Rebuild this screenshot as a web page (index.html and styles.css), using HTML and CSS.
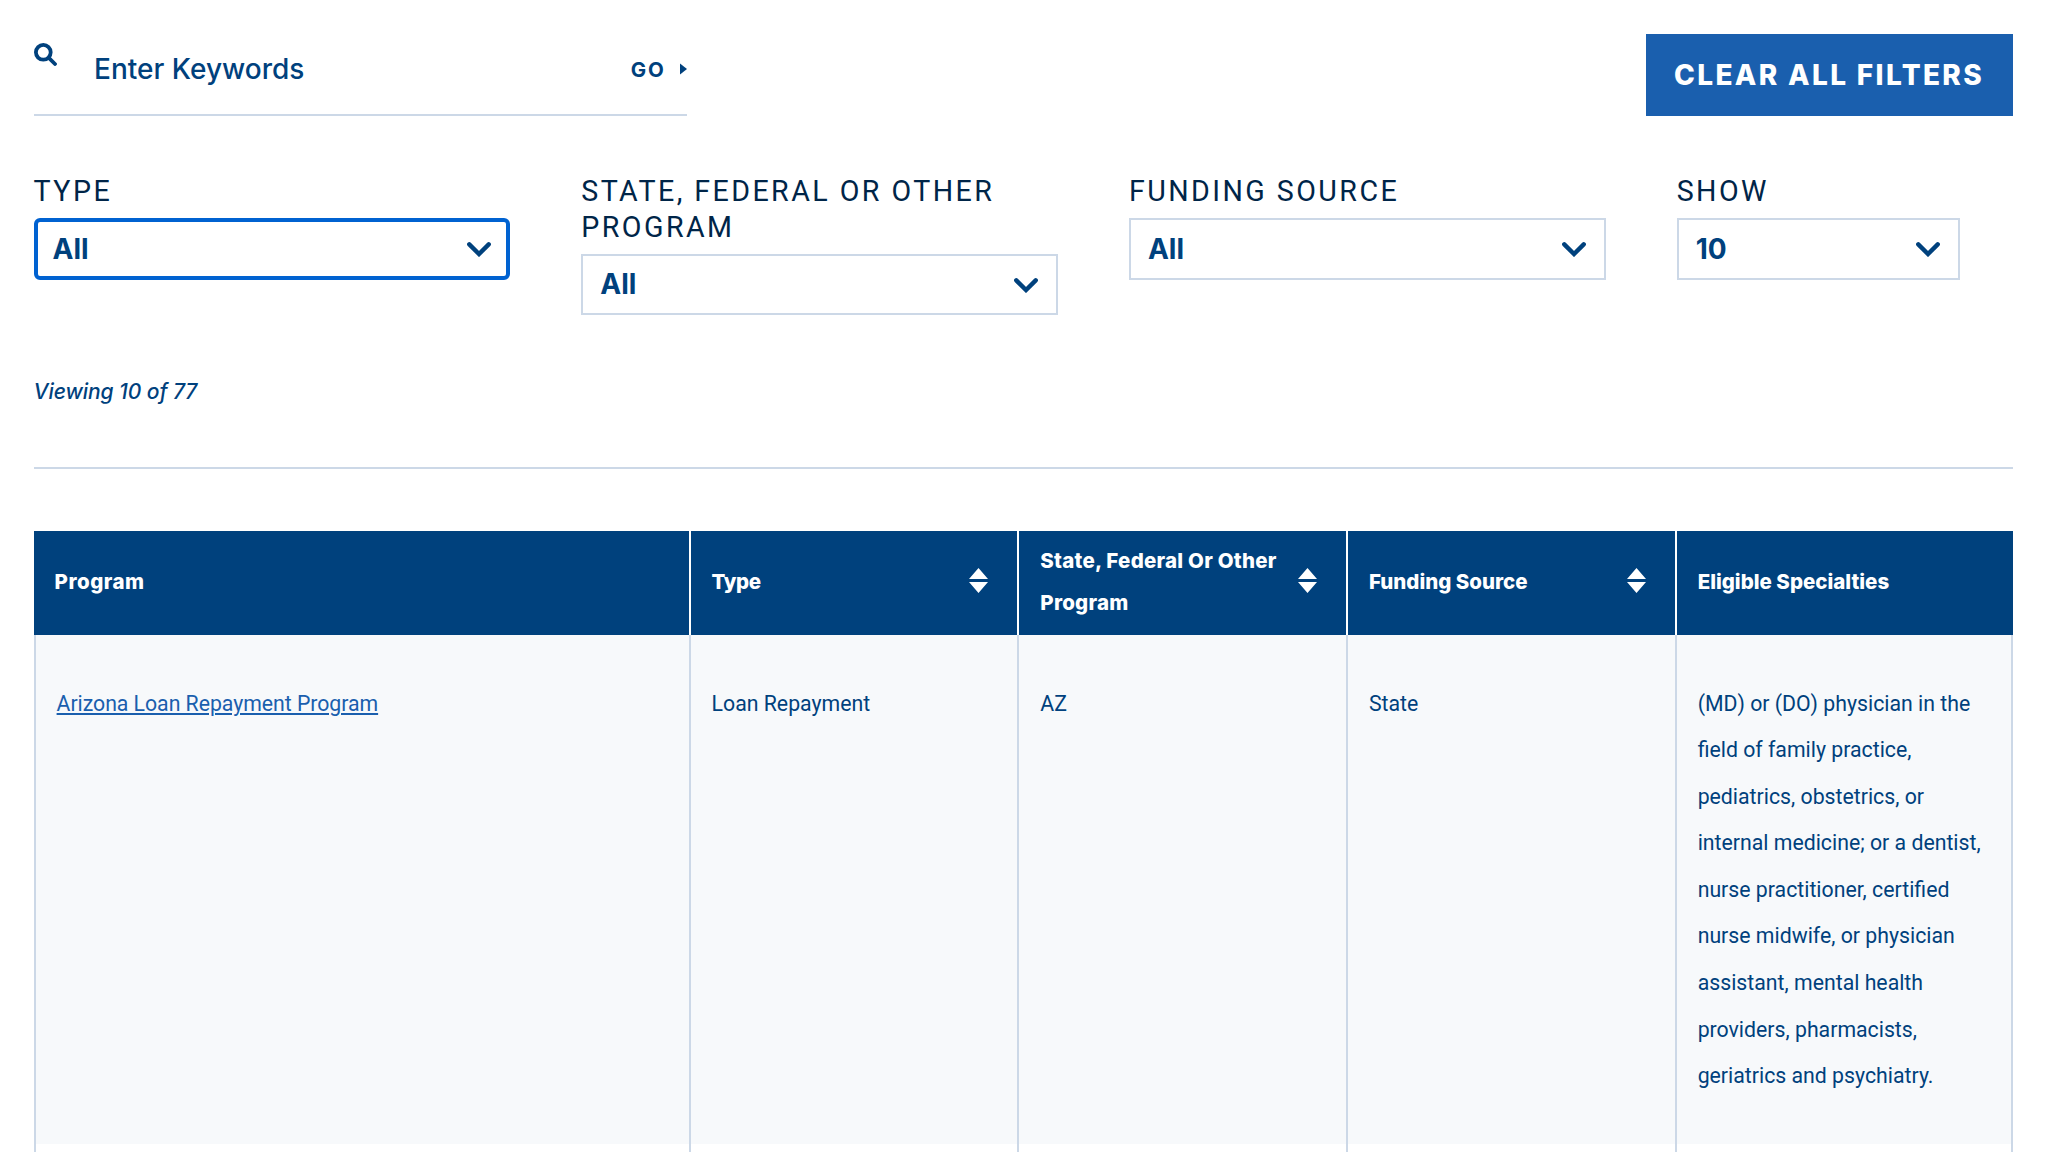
FILE: index.html
```
<!DOCTYPE html>
<html lang="en">
<head>
    <meta charset="UTF-8">
    <meta name="viewport" content="width=device-width, initial-scale=1.0">
    <title>Loan Repayment Programs</title>
    <link rel="stylesheet" href="styles.css">
</head>
<body>
    <div class="container">
        <div class="top-bar">
            <form class="search">
                <svg class="search-icon" viewBox="0 0 23 23"><circle cx="9.3" cy="9.3" r="7.4"/><path d="M14.8 14.8L21 21"/></svg>
                <span class="search-text">Enter Keywords</span>
                <button class="go-button" type="button">Go <svg class="go-arrow" viewBox="0 0 7 12"><path d="M0 0.5L7 6L0 11.5Z"/></svg></button>
            </form>
            <button class="clear-button" type="button">Clear All Filters</button>
        </div>

        <div class="filters">
            <div class="filter">
                <div class="filter-label">Type</div>
                <div class="select focused"><span>All</span><svg class="chevron" viewBox="0 0 24 15"><path d="M2.3 2.4L12 12L21.7 2.4"/></svg></div>
            </div>
            <div class="filter">
                <div class="filter-label">State, Federal or Other Program</div>
                <div class="select"><span>All</span><svg class="chevron" viewBox="0 0 24 15"><path d="M2.3 2.4L12 12L21.7 2.4"/></svg></div>
            </div>
            <div class="filter">
                <div class="filter-label">Funding Source</div>
                <div class="select"><span>All</span><svg class="chevron" viewBox="0 0 24 15"><path d="M2.3 2.4L12 12L21.7 2.4"/></svg></div>
            </div>
            <div class="filter filter-small">
                <div class="filter-label">Show</div>
                <div class="select"><span>10</span><svg class="chevron" viewBox="0 0 24 15"><path d="M2.3 2.4L12 12L21.7 2.4"/></svg></div>
            </div>
        </div>

        <p class="viewing">Viewing 10 of 77</p>

        <table class="programs">
            <thead>
                <tr>
                    <th class="col-program">Program</th>
                    <th class="col"><div class="sortable"><span class="h-type">Type</span><svg class="sort" viewBox="0 0 19 25"><path d="M0 11L9.5 0L19 11ZM0 14H19L9.5 25Z"/></svg></div></th>
                    <th class="col"><div class="sortable"><span class="h-state">State, Federal Or Other Program</span><svg class="sort" viewBox="0 0 19 25"><path d="M0 11L9.5 0L19 11ZM0 14H19L9.5 25Z"/></svg></div></th>
                    <th class="col"><div class="sortable"><span>Funding Source</span><svg class="sort" viewBox="0 0 19 25"><path d="M0 11L9.5 0L19 11ZM0 14H19L9.5 25Z"/></svg></div></th>
                    <th>Eligible Specialties</th>
                </tr>
            </thead>
            <tbody>
                <tr>
                    <td class="program-cell"><a href="#">Arizona Loan Repayment Program</a></td>
                    <td>Loan Repayment</td>
                    <td>AZ</td>
                    <td>State</td>
                    <td>(MD) or (DO) physician in the field of family practice, pediatrics, obstetrics, or internal medicine; or a dentist, nurse practitioner, certified nurse midwife, or physician assistant, mental health providers, pharmacists, geriatrics and psychiatry.</td>
                </tr>
                <tr class="next-row">
                    <td></td>
                    <td></td>
                    <td></td>
                    <td></td>
                    <td></td>
                </tr>
            </tbody>
        </table>
    </div>
</body>
</html>
```
FILE: styles.css
```
* {
    box-sizing: border-box;
}

body {
    margin: 0;
    height: 1152px;
    overflow: hidden;
    background-color: #fff;
    color: #00417d;
    font-family: Roboto, sans-serif;
}

.container {
    width: 1979px;
    margin-left: 33.6px;
    padding-top: 34px;
}

.top-bar {
    display: flex;
    justify-content: space-between;
    height: 82px;
}

.search {
    display: flex;
    width: 653px;
    border-bottom: 2px solid #ccd8e7;
}

.search-icon {
    width: 23px;
    height: 23px;
    margin-top: 9px;
    fill: none;
    stroke: #00417d;
    stroke-width: 3.8;
    stroke-linecap: round;
}

.search-text {
    flex: 1;
    margin-left: 37.5px;
    font: 500 28px/70px Inter, sans-serif;
}

.go-button {
    display: flex;
    align-items: center;
    gap: 14px;
    height: 70px;
    padding: 0;
    border: none;
    background: none;
    color: #00417d;
    font: 700 20.5px Inter, sans-serif;
    letter-spacing: 1.8px;
    text-transform: uppercase;
}

.go-arrow {
    width: 7px;
    height: 12px;
    fill: #00417d;
}

.clear-button {
    width: 367px;
    padding: 0 0 1px;
    border: none;
    background-color: #1a5fae;
    color: #fff;
    font: 800 28px Inter, sans-serif;
    letter-spacing: 2.35px;
    text-transform: uppercase;
    white-space: nowrap;
}

.filters {
    display: flex;
    align-items: flex-start;
    gap: 71px;
    height: 197px;
    margin-top: 58px;
}

.filter {
    width: 476.7px;
}

.filter-small {
    width: 283px;
}

.filter-label {
    margin-bottom: 8.5px;
    color: #002548;
    font-size: 28.6px;
    line-height: 35.5px;
    letter-spacing: 2.45px;
    text-transform: uppercase;
}

.select {
    display: flex;
    justify-content: space-between;
    align-items: center;
    height: 61.5px;
    padding: 0 18px 0 17px;
    border: 2px solid #ccd8e7;
    font: 700 28px Inter, sans-serif;
}

.select.focused {
    padding: 0 15px;
    border: 4px solid #0062d1;
    border-radius: 6px;
}

.chevron {
    width: 24px;
    height: 15px;
    margin-top: 2px;
    fill: none;
    stroke: #00417d;
    stroke-width: 4.4;
    stroke-linecap: round;
}

.viewing {
    height: 98px;
    margin: 0 0 62px;
    border-bottom: 2px solid #ccd8e7;
    font: italic 500 21px/42px Inter, sans-serif;
    letter-spacing: -0.06px;
}

.programs {
    width: 100%;
    table-layout: fixed;
    border-collapse: separate;
    border-spacing: 0;
}

.col-program {
    width: 657px;
}

.col {
    width: 328.7px;
}

.programs th {
    height: 104px;
    padding: 0 20px 2px 21px;
    border-right: 2px solid #fff;
    background-color: #00417d;
    color: #fff;
    font: 800 20.5px/42.5px Inter, sans-serif;
    text-align: left;
}

.programs th:last-child {
    border-right: none;
}

.programs .col-program {
    letter-spacing: 0.5px;
}

.sortable {
    display: flex;
    justify-content: space-between;
    align-items: center;
    padding-right: 9px;
}

.h-type {
    letter-spacing: -0.4px;
}

.h-state {
    letter-spacing: 0.25px;
}

.sort {
    flex-shrink: 0;
    width: 19px;
    height: 25px;
    margin-bottom: 3px;
    fill: #fff;
}

.programs td {
    height: 509px;
    padding: 45.5px 20px 0 21px;
    border-right: 2px solid #ccd8e7;
    background-color: #f7f9fb;
    font-size: 21.27px;
    line-height: 46.6px;
    vertical-align: top;
}

.programs td:first-child {
    border-left: 2px solid #ccd8e7;
}

.program-cell a {
    color: #1a5fae;
    letter-spacing: -0.04px;
    text-underline-offset: 2px;
}

.programs .next-row td {
    height: 20px;
    padding: 0;
    background-color: #fff;
}
```
